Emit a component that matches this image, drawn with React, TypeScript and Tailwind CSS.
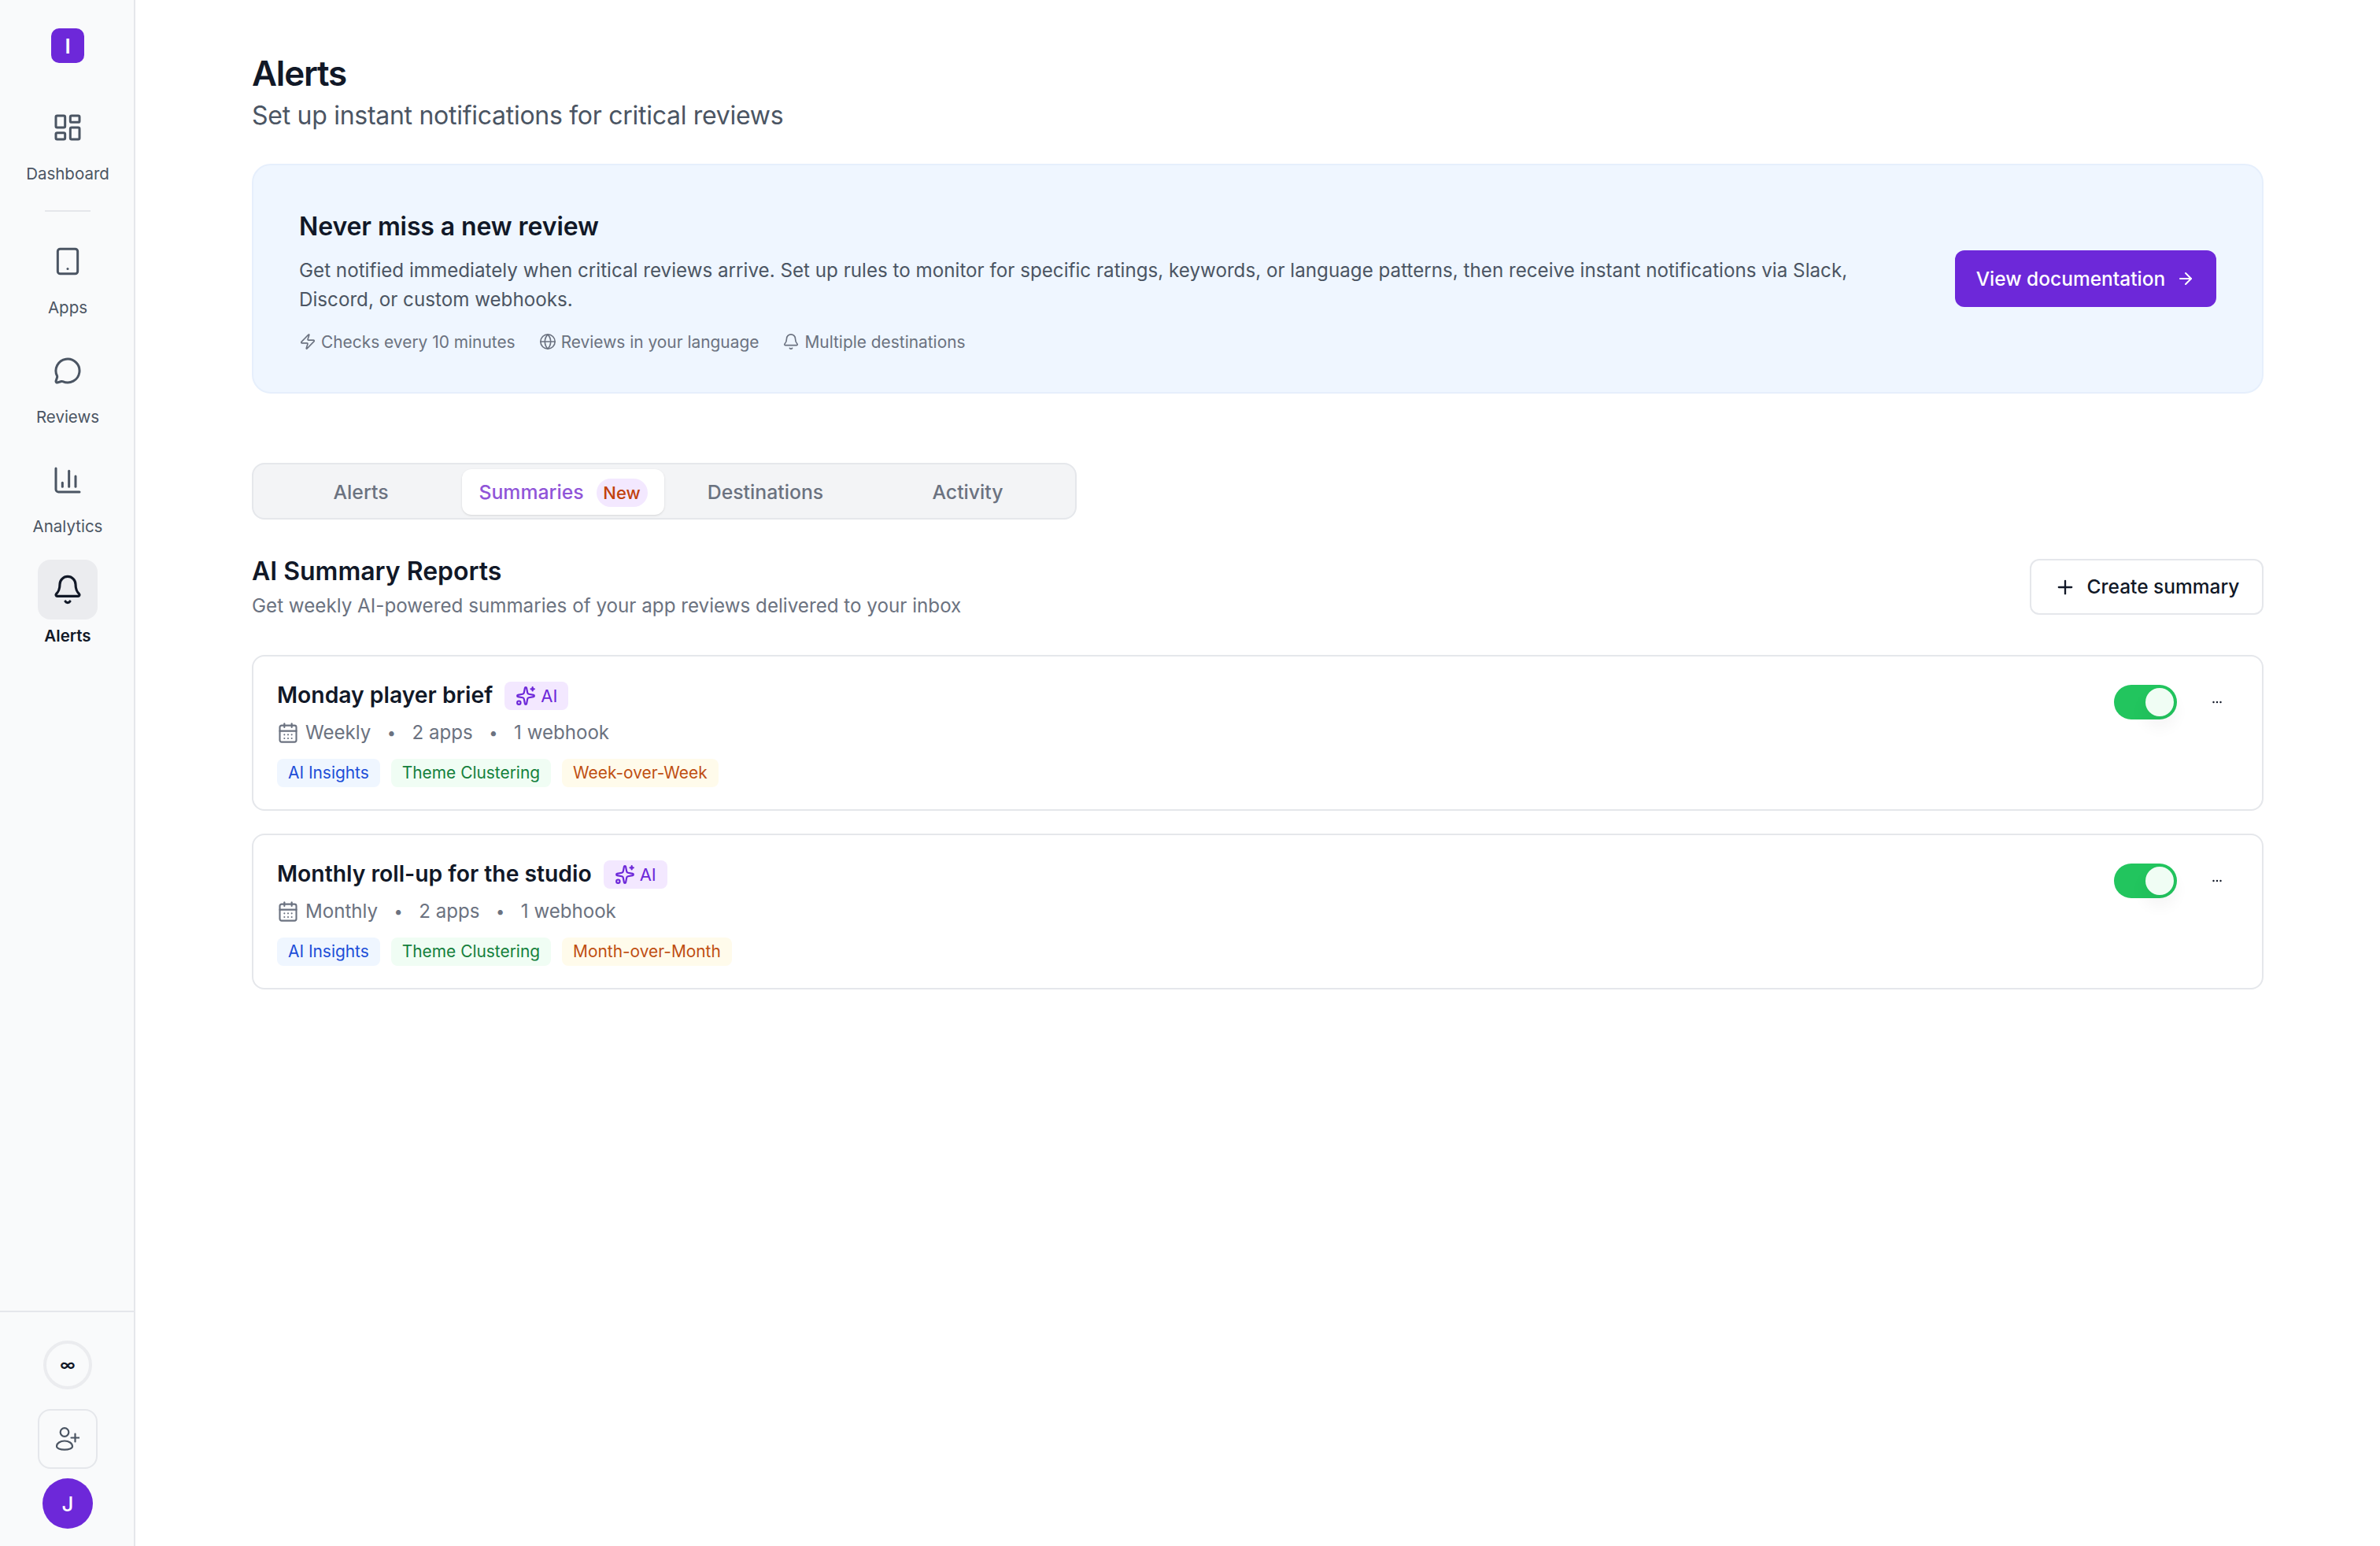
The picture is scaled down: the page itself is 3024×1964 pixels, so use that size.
import { ArrowRight, Bell, CalendarDays, ChartColumn, Globe, LayoutDashboard, MessageCircle, Plus, Sparkles, Tablet, Zap } from "lucide-react"
import type { ReactNode } from "react"

const PURPLE = "bg-[#6d28d9]"

function NavItem({ icon, label, active }: { icon: ReactNode; label: string; active?: boolean }) {
  return (
    <div className="flex flex-col items-center">
      <div className={`flex h-[76px] w-[76px] items-center justify-center rounded-[16px] ${active ? "bg-[#ebecef] text-[#111827]" : "text-[#4b5563]"}`}>
        {icon}
      </div>
      <span className={`mt-[7px] text-[20.5px] leading-[28px] ${active ? "font-semibold text-[#111827]" : "text-[#4b5563]"}`}>{label}</span>
    </div>
  )
}

function UserAddIcon() {
  return (
    <svg width="30" height="30" viewBox="0 0 30 30" fill="none" stroke="currentColor" strokeWidth="2.2" strokeLinecap="round" strokeLinejoin="round">
      <circle cx="11" cy="6.5" r="5.3" />
      <path d="M1 24.5C1 20.5 5.5 17.5 11 17.5C16.5 17.5 21 20.5 21 24.5C21 27 16.5 28.6 11 28.6C5.5 28.6 1 27 1 24.5Z" />
      <path d="M24.5 8.5V18.5M19.5 13.5H29.5" />
    </svg>
  )
}

function Sidebar() {
  return (
    <aside className="flex h-screen w-[172px] shrink-0 flex-col border-r-2 border-[#e5e7eb] bg-[#f9fafb]">
      <div className="flex flex-1 flex-col items-center pt-[36px] pl-[2px]">
        <div className={`flex h-[44px] w-[42px] items-center justify-center rounded-[10px] ${PURPLE} text-[26px] font-semibold text-white`}>I</div>
        <div className="mt-[44px]">
          <NavItem icon={<LayoutDashboard size={40} strokeWidth={1.8} />} label="Dashboard" />
        </div>
        <div className="mt-[32px] h-[2px] w-[58px] bg-[#e5e7eb]" />
        <div className="mt-[25px] flex flex-col gap-[28px]">
          <NavItem icon={<Tablet size={38} strokeWidth={1.9} />} label="Apps" />
          <NavItem icon={<MessageCircle size={36} strokeWidth={2} />} label="Reviews" />
          <NavItem icon={<ChartColumn size={40} strokeWidth={1.8} />} label="Analytics" />
          <NavItem icon={<Bell size={40} strokeWidth={1.9} />} label="Alerts" active />
        </div>
      </div>
      <div className="flex flex-col items-center border-t-2 border-[#e5e7eb] pt-[36px] pb-[22px] pl-[2px]">
        <div className="flex h-[62px] w-[62px] items-center justify-center rounded-full border-[4px] border-[#ebecef] text-[20px] font-semibold text-[#111827]">∞</div>
        <div className="mt-[25px] flex h-[76px] w-[76px] items-center justify-center rounded-[16px] border-2 border-[#e5e7eb] text-[#4b5563]">
          <UserAddIcon />
        </div>
        <div className={`mt-[12px] flex h-[64px] w-[64px] items-center justify-center rounded-full ${PURPLE} text-[26px] font-medium text-white`}>J</div>
      </div>
    </aside>
  )
}

function MetaNote({ icon, text }: { icon: ReactNode; text: string }) {
  return (
    <span className="flex items-center gap-[6px]">
      {icon}
      {text}
    </span>
  )
}

function Tab({ label, active, badge }: { label: string; active?: boolean; badge?: string }) {
  return (
    <div className={`flex h-[58px] items-center justify-center gap-[16px] rounded-[12px] pt-[2px] text-[24.8px] font-medium ${active ? "bg-white text-[#9055d8] shadow-sm" : "text-[#6b7280]"}`}>
      {label}
      {badge && <span className="flex h-[36px] w-[65px] items-center justify-center rounded-full bg-[#f3e8ff] text-[22px] text-[#c2410c]">{badge}</span>}
    </div>
  )
}

function Tag({ label, className }: { label: string; className: string }) {
  return <span className={`flex h-[36px] items-center rounded-[8px] px-[14px] text-[20.9px] ${className}`}>{label}</span>
}

function ReportCard({ title, cadence, period }: { title: string; cadence: string; period: string }) {
  return (
    <div className="flex rounded-[16px] border-2 border-[#e5e7eb] px-[30px] pt-[32px] pb-[28px]">
      <div className="flex-1">
        <div className="flex h-[36px] items-center gap-[15px]">
          <h3 className="-mt-[2px] text-[28.3px] font-semibold text-[#111827]">{title}</h3>
          <span className="flex h-[36px] items-center gap-[6px] rounded-[8px] bg-[#f3e8ff] px-[14px] text-[22px] font-normal text-[#6d28d9]">
            <Sparkles size={26} strokeWidth={2} />
            AI
          </span>
        </div>
        <div className="mt-[11px] flex h-[36px] items-center text-[24.1px] text-[#6b7280]">
          <CalendarDays size={28} strokeWidth={1.8} />
          <span className="ml-[8px]">{cadence}</span>
          <span className="mx-[20.5px] text-[20px]">•</span>
          <span>2 apps</span>
          <span className="mx-[20.5px] text-[20px]">•</span>
          <span>1 webhook</span>
        </div>
        <div className="mt-[15px] flex gap-[14px]">
          <Tag label="AI Insights" className="bg-[#eff6ff] text-[#1d4ed8]" />
          <Tag label="Theme Clustering" className="bg-[#f0fdf4] text-[#15803d]" />
          <Tag label={period} className="bg-[#fffbeb] text-[#bf4f12]" />
        </div>
      </div>
      <div className="flex items-start gap-[24px] pt-[4px]">
        <button className="flex h-[44px] w-[80px] justify-end rounded-full bg-[#22c55e] p-[4px]">
          <span className="h-[36px] w-[36px] rounded-full bg-[#f0fdf4] shadow-[0_12px_18px_4px_rgba(0,0,0,0.04)]" />
        </button>
        <button className="flex h-[44px] w-[54px] items-center justify-center text-[#111827]">
          <svg width="12" height="4" viewBox="0 0 12 4" fill="currentColor">
            <circle cx="1.5" cy="2" r="1.2" />
            <circle cx="6" cy="2" r="1.2" />
            <circle cx="10.5" cy="2" r="1.2" />
          </svg>
        </button>
      </div>
    </div>
  )
}

export default function App() {
  return (
    <div className="flex h-screen bg-white font-['Inter',sans-serif]">
      <Sidebar />
      <main className="flex-1 px-[148px] pt-[69px]">
        <h1 className="text-[44px] leading-[48px] font-semibold tracking-[-1.2px] text-[#111827]">Alerts</h1>
        <p className="mt-[10px] text-[32px] leading-[40px] tracking-[-0.28px] text-[#4b5563]">Set up instant notifications for critical reviews</p>

        <section className="mt-[41px] flex h-[292px] items-center rounded-[24px] border-2 border-[#e6effc] bg-[#eff6ff] pr-[58px] pl-[58px]">
          <div className="flex-1 pr-[48px]">
            <h2 className="mt-[10px] text-[32px] leading-[40px] font-semibold tracking-[-0.1px] text-[#111827]">Never miss a new review</h2>
            <p className="mt-[17px] text-[24.2px] leading-[37px] text-[#4b5563]">
              Get notified immediately when critical reviews arrive. Set up rules to monitor for specific ratings, keywords, or language patterns, then receive instant notifications via Slack, Discord, or custom webhooks.
            </p>
            <div className="mt-[20px] flex h-[32px] items-center gap-[30px] text-[20.9px] text-[#6b7280]">
              <MetaNote icon={<Zap size={22} strokeWidth={1.8} />} text="Checks every 10 minutes" />
              <MetaNote icon={<Globe size={22} strokeWidth={1.8} />} text="Reviews in your language" />
              <MetaNote icon={<Bell size={22} strokeWidth={1.8} />} text="Multiple destinations" />
            </div>
          </div>
          <button className={`flex h-[72px] w-[332px] shrink-0 items-center justify-center gap-[14px] rounded-[12px] ${PURPLE} text-[24.5px] font-medium text-white`}>
            View documentation
            <ArrowRight size={24} strokeWidth={2} />
          </button>
        </section>

        <div className="mt-[88px] grid h-[72px] w-[1048px] grid-cols-4 rounded-[16px] border-2 border-[#e5e7eb] bg-[#f3f4f6] px-[8px] py-[6px]">
          <Tab label="Alerts" />
          <Tab label="Summaries" badge="New" active />
          <Tab label="Destinations" />
          <Tab label="Activity" />
        </div>

        <div className="mt-[46px] flex items-start justify-between">
          <div>
            <h2 className="text-[32px] leading-[40px] font-semibold text-[#111827]">AI Summary Reports</h2>
            <p className="mt-[6px] text-[24.2px] leading-[36px] text-[#6b7280]">Get weekly AI-powered summaries of your app reviews delivered to your inbox</p>
          </div>
          <button className="mt-[4px] flex h-[71px] w-[297px] items-center justify-center gap-[14px] rounded-[12px] border-2 border-[#e5e7eb] bg-white text-[24.5px] font-medium text-[#111827]">
            <Plus size={28} strokeWidth={2} />
            Create summary
          </button>
        </div>

        <div className="mt-[44px] flex flex-col gap-[29px]">
          <ReportCard title="Monday player brief" cadence="Weekly" period="Week-over-Week" />
          <ReportCard title="Monthly roll-up for the studio" cadence="Monthly" period="Month-over-Month" />
        </div>
      </main>
    </div>
  )
}
